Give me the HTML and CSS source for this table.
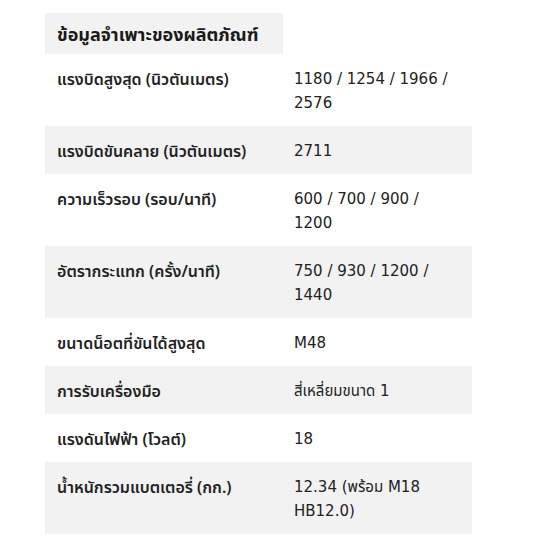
FILE: index.html
```html
<!DOCTYPE html>
<html lang="th">
<head>
<meta charset="utf-8">
<link rel="stylesheet" href="styles.css">
</head>
<body>
<div class="specs">
  <h2 class="specs-title">ข้อมูลจำเพาะของผลิตภัณฑ์</h2>
  <table class="spec-table">
    <tr><td class="label">แรงบิดสูงสุด (นิวตันเมตร)</td><td class="value">1180 / 1254 / 1966 / 2576</td></tr>
    <tr class="alt"><td class="label">แรงบิดขันคลาย (นิวตันเมตร)</td><td class="value">2711</td></tr>
    <tr><td class="label">ความเร็วรอบ (รอบ/นาที)</td><td class="value">600 / 700 / 900 / 1200</td></tr>
    <tr class="alt"><td class="label">อัตรากระแทก (ครั้ง/นาที)</td><td class="value">750 / 930 / 1200 / 1440</td></tr>
    <tr><td class="label">ขนาดน็อตที่ขันได้สูงสุด</td><td class="value">M48</td></tr>
    <tr class="alt"><td class="label">การรับเครื่องมือ</td><td class="value">สี่เหลี่ยมขนาด 1</td></tr>
    <tr><td class="label">แรงดันไฟฟ้า (โวลต์)</td><td class="value">18</td></tr>
    <tr class="alt"><td class="label">น้ำหนักรวมแบตเตอรี่ (กก.)</td><td class="value">12.34 (พร้อม M18 HB12.0)</td></tr>
  </table>
</div>
</body>
</html>
```

FILE: styles.css
```css
html, body {
  margin: 0;
  padding: 0;
  background: #ffffff;
}
body {
  font-family: "Noto Sans", "Noto Sans Thai", "Liberation Sans", sans-serif;
  color: #222222;
}
.specs {
  padding: 13px 0 0 45px;
  width: 427px;
}
.specs-title {
  display: block;
  width: 214px;
  margin: 0;
  padding: 0 12px;
  height: 41px;
  line-height: 42px;
  background: #f2f2f2;
  font-size: 18px;
  font-weight: 700;
  color: #1a1a1a;
}
.spec-table {
  width: 427px;
  border-collapse: collapse;
  table-layout: fixed;
}
.spec-table td {
  padding: 13px 12px 11px;
  line-height: 24px;
  vertical-align: top;
}
.spec-table .label {
  width: 213px;
  font-size: 16px;
  font-weight: 600;
}
.spec-table .value {
  font-family: "DejaVu Sans", "Noto Sans Thai", "Noto Sans", sans-serif;
  font-size: 15px;
  font-weight: 400;
}
.spec-table tr.alt td {
  background: #f2f2f2;
}
```
